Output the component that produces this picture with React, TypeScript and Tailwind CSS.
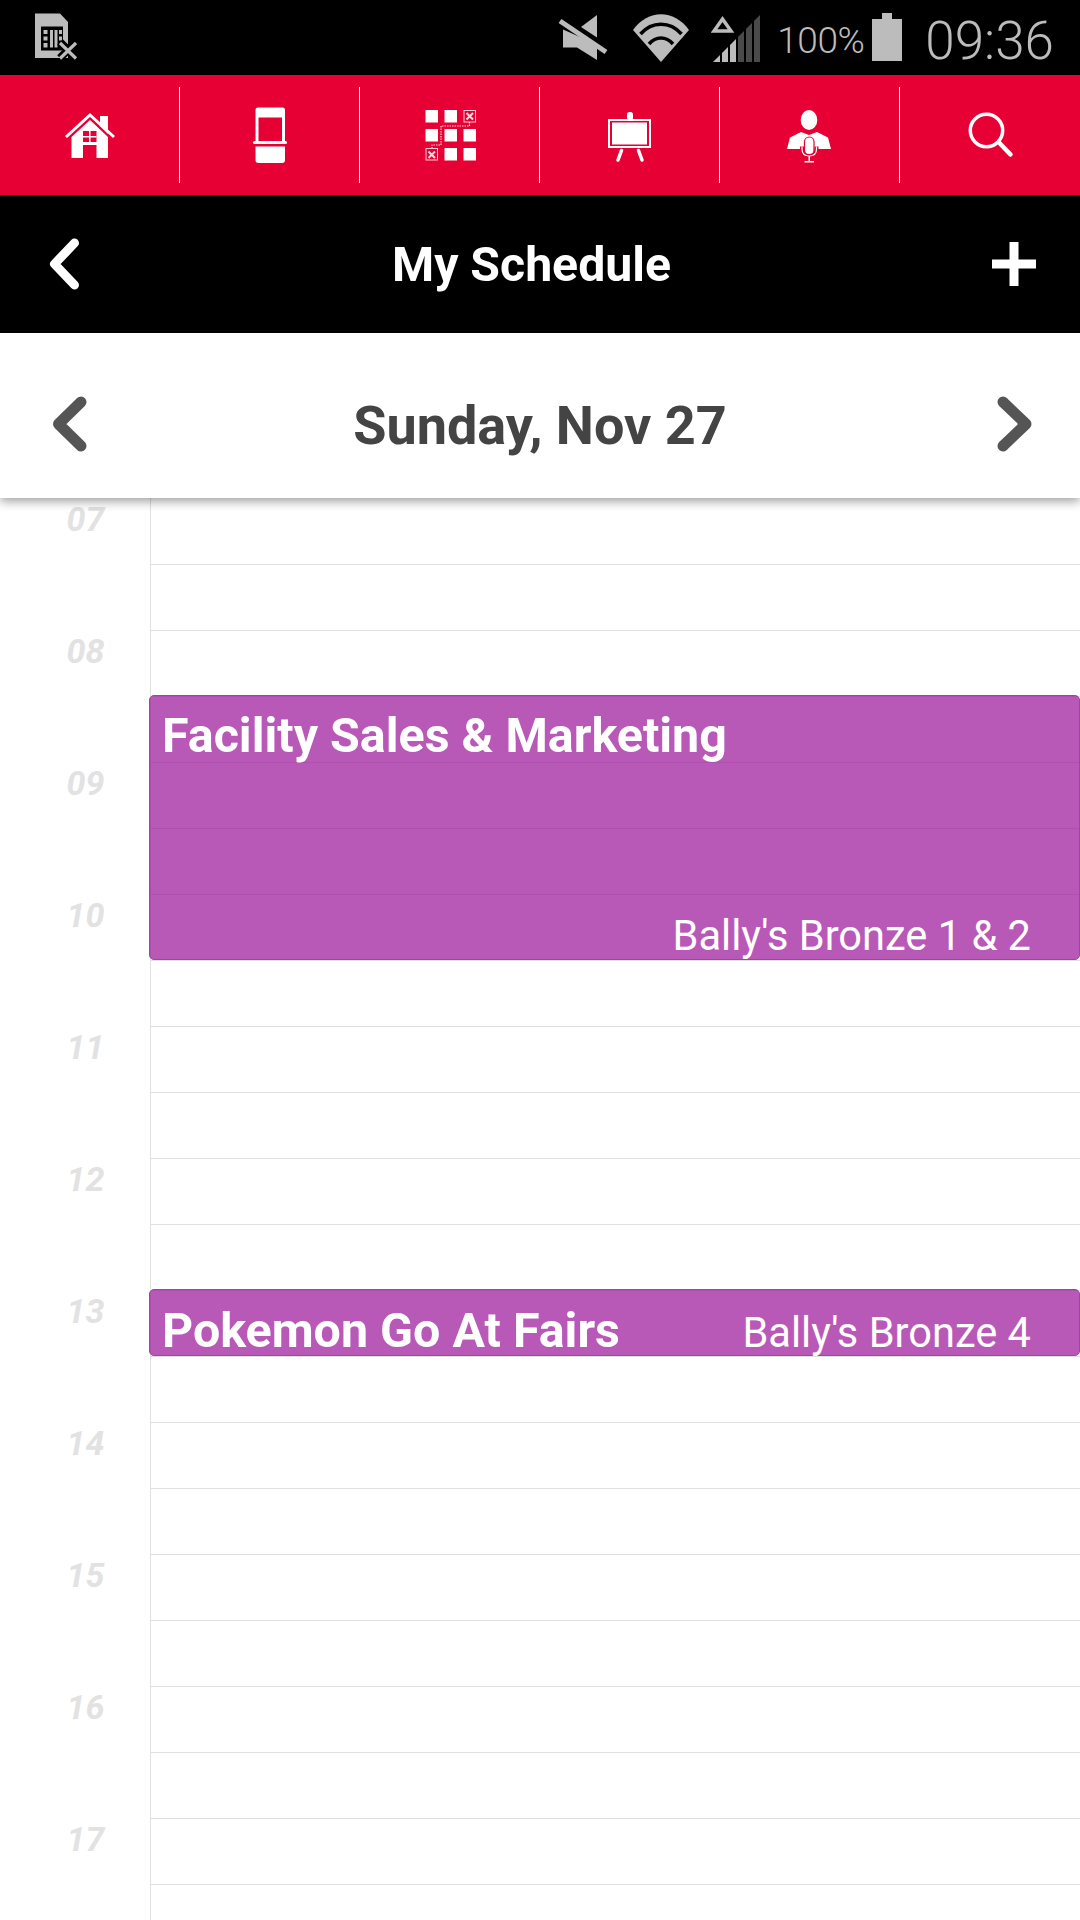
const HOURS = ["07","08","09","10","11","12","13","14","15","16","17"];
const ROWS = Array.from({ length: 22 }, (_, i) => i);
const GREY = "#bcbcbc";
const RED = "#e70033";

function Sim() {
  return (
    <svg width="60" height="60" viewBox="25 10 60 60" className="block">
      <path d="M35 15.5H60L68 24V60H35Z" fill={GREY} />
      <rect x="41" y="28.5" width="22" height="24" fill="#000" />
      <rect x="43.5" y="32" width="4" height="4" fill={GREY} />
      <rect x="43.5" y="38.5" width="4" height="4" fill={GREY} />
      <rect x="43.5" y="45" width="4" height="4.5" fill={GREY} />
      <rect x="50" y="32" width="3" height="17.5" fill={GREY} />
      <rect x="54.5" y="32" width="3" height="17.5" fill={GREY} />
      <rect x="59" y="32" width="3" height="4" fill={GREY} />
      <rect x="59" y="38.5" width="3" height="4" fill={GREY} />
      <path d="M60 44L76 60M76 44L60 60" stroke="#000" strokeWidth="8" />
      <path d="M60 45L76 60.5M76 45L60 60.5" stroke={GREY} strokeWidth="3.2" />
    </svg>
  );
}

function Mute() {
  return (
    <svg width="50" height="50" viewBox="558 13 50 50" className="block">
      <path d="M563 29.5V47.5H577L597 60V44.5Z" fill={GREY} />
      <path d="M597 15V37.5L581 27Z" fill={GREY} />
      <path d="M560 21L606 52" stroke={GREY} strokeWidth="5" />
    </svg>
  );
}

function Wifi() {
  return (
    <svg width="58" height="50" viewBox="632 12 58 50" className="block">
      <path d="M633 29C648 8 674 8 689 29L661 61Z" fill={GREY} />
      <path d="M640.500 33C652 20 670 20 681.500 33" fill="none" stroke="#000" strokeWidth="3.500" />
      <path d="M649 43C656 35 666 35 673 43" fill="none" stroke="#000" strokeWidth="3.500" />
    </svg>
  );
}

function Signal() {
  return (
    <svg width="50" height="50" viewBox="710 12 50 50" className="block">
      <path d="M721.500 18L730 30H713Z" fill="none" stroke={GREY} strokeWidth="3.500" />
      <path d="M712 61L719 54V61Z" fill={GREY} />
      <path d="M721 61V52L727 46V61Z" fill={GREY} />
      <path d="M729 61V44L735 38V61Z" fill={GREY} />
      <path d="M737 61V36L743 30V61Z" fill="#4a4a4a" />
      <path d="M745 61V28L751 22V61Z" fill="#4a4a4a" />
      <path d="M753 61V20L759 14V61Z" fill="#4a4a4a" />
    </svg>
  );
}

function Battery() {
  return (
    <svg width="30" height="50" viewBox="873 12 30 50" className="block">
      <path d="M883 12H893V18H903V60H873V18H883Z" fill={GREY} />
    </svg>
  );
}

function Home() {
  return (
    <svg width="80" height="80" viewBox="50 95 80 80" className="block">
      <path d="M66 137L90 115L114 137" fill="none" stroke="#fff" strokeWidth="3" />
      <path d="M100 116H108V134L100 126Z" fill="#fff" />
      <path d="M71.500 158V137L90 120L108 137V158H96.500V145H83V158Z" fill="#fff" />
      <rect x="83" y="131" width="13.500" height="11" fill={RED} />
      <rect x="89" y="131" width="1.500" height="11" fill="#fff" />
      <rect x="83" y="136" width="13.500" height="1.500" fill="#fff" />
    </svg>
  );
}

function Kiosk() {
  return (
    <svg width="80" height="80" viewBox="230 95 80 80" className="block">
      <path d="M255.500 141V110Q255.500 107.500 258 107.500H282.500Q285 107.500 285 110V141H282V117.500H258.500V141Z" fill="#fff" />
      <rect x="253" y="141" width="34" height="3" rx="1.500" fill="#fff" />
      <path d="M255.500 146.500H285V160Q285 163 282 163H258.500Q255.500 163 255.500 160Z" fill="#fff" />
    </svg>
  );
}

function GridMap() {
  const squares = [
    [425.5, 110], [444.5, 110],
    [425.5, 129], [444.5, 129], [463.500, 129],
    [444.5, 148], [463.500, 148],
  ];
  return (
    <svg width="80" height="80" viewBox="410 95 80 80" className="block">
      {squares.map(([x, y]) => (
        <rect key={`${x}-${y}`} x={x} y={y} width="12.500" height="12.500" fill="#fff" />
      ))}
      <rect x="464" y="110.500" width="11.500" height="11.500" fill="none" stroke="#fff" strokeOpacity="0.8" />
      <rect x="426" y="148.500" width="11.500" height="11.500" fill="none" stroke="#fff" strokeOpacity="0.8" />
      <path d="M466.500 113L473 119.500M473 113L466.500 119.500M428.500 151.500L435 158M435 151.500L428.500 158" stroke="#fff" strokeOpacity="0.85" strokeWidth="2" />
      <path d="M469.500 122V126H441V145H432V148" fill="none" stroke="#fff" strokeOpacity="0.85" strokeWidth="1.200" strokeDasharray="1.500 1" />
    </svg>
  );
}

function Easel() {
  return (
    <svg width="80" height="80" viewBox="590 95 80 80" className="block">
      <rect x="627" y="112" width="6" height="8" rx="2.500" fill="#fff" />
      <rect x="609" y="120" width="41" height="27" fill="none" stroke="#fff" strokeWidth="2" />
      <rect x="612" y="122.500" width="35" height="22" fill="#fff" />
      <path d="M621.500 150.500L618 160M638.500 150.500L642 160" stroke="#fff" strokeWidth="3.500" strokeLinecap="round" />
    </svg>
  );
}

function Speaker() {
  return (
    <svg width="80" height="80" viewBox="770 95 80 80" className="block">
      <ellipse cx="809" cy="120" rx="8.300" ry="10" fill="#fff" />
      <path d="M801 132L809 135L817 132L828 137.500L831 149H787L790 137.500Z" fill="#fff" />
      <rect x="804.500" y="137" width="9.500" height="18" rx="4.700" fill="#fff" stroke={RED} strokeWidth="1.200" />
      <path d="M802 146.500V149Q802 156 809.200 156Q816.500 156 816.500 149V146.500" fill="none" stroke={RED} strokeWidth="4" />
      <path d="M802 146.500V149Q802 156 809.200 156Q816.500 156 816.500 149V146.500" fill="none" stroke="#fff" strokeWidth="1.200" />
      <rect x="808.500" y="156" width="1.500" height="5.500" fill="#fff" />
      <rect x="804.500" y="161" width="9.500" height="1.500" fill="#fff" />
    </svg>
  );
}

function Search() {
  return (
    <svg width="80" height="80" viewBox="950 95 80 80" className="block">
      <circle cx="986.500" cy="130.500" r="16.200" fill="none" stroke="#fff" strokeWidth="3.500" />
      <path d="M998.500 142L1010.500 154.500" stroke="#fff" strokeWidth="4.500" strokeLinecap="round" />
    </svg>
  );
}

function Chevron({ d, color, w, vb, width, height, blur }: { d: string; color: string; w: number; vb: string; width: number; height: number; blur?: boolean }) {
  return (
    <svg width={width} height={height} viewBox={vb} className={blur ? "block blur-[0.6px]" : "block"}>
      <path d={d} fill="none" stroke={color} strokeWidth={w} strokeLinecap="round" strokeLinejoin="round" />
    </svg>
  );
}

function NavCell({ children, last }: { children: React.ReactNode; last?: boolean }) {
  return (
    <div className={last ? "w-[180px] h-24 flex items-center justify-center" : "w-[180px] h-24 flex items-center justify-center border-r border-white"}>
      {children}
    </div>
  );
}

export default function App() {
  return (
    <div className="w-[1080px] h-[1920px] overflow-hidden bg-white font-['Roboto',sans-serif] flex flex-col">
      <div className="h-[75px] bg-black flex items-center justify-between shrink-0 pl-[25px] pr-[26px]">
        <Sim />
        <div className="flex items-center">
          <Mute />
          <div className="ml-[24px]"><Wifi /></div>
          <div className="ml-[21px]"><Signal /></div>
          <span className="ml-[16px] pt-[5px] text-[37px] leading-none text-[#bcbcbc] font-light tracking-[-0.5px]">100%</span>
          <div className="ml-[8px]"><Battery /></div>
          <span className="ml-[23px] pt-[7px] text-[53px] leading-none text-[#bcbcbc] font-light">09:36</span>
        </div>
      </div>

      <div className="h-[120px] bg-[#e70033] flex items-center shrink-0">
        <NavCell><Home /></NavCell>
        <NavCell><Kiosk /></NavCell>
        <NavCell><GridMap /></NavCell>
        <NavCell><Easel /></NavCell>
        <NavCell><Speaker /></NavCell>
        <NavCell last><Search /></NavCell>
      </div>

      <div className="h-[138px] bg-black flex items-center justify-between shrink-0 pl-[46px] pr-[42px]">
        <Chevron d="M74.500 243L54.500 264L74.500 285" color="#fff" w={9} vb="46 235 40 58" width={40} height={58} />
        <span className="mr-[13px] pt-[2px] text-[48.2px] font-bold text-white leading-none">My Schedule</span>
        <svg width="48" height="48" viewBox="990 240 48 48" className="block">
          <path d="M992 259.500H1009.500V242H1018.500V259.500H1036V268.500H1018.500V286H1009.500V268.500H992Z" fill="#fff" />
        </svg>
      </div>

      <div className="h-[165px] bg-white flex items-center justify-between shrink-0 pl-[48px] pr-[43px] pt-[17px] relative z-10 shadow-[0_3px_10px_rgba(0,0,0,0.4)]">
        <Chevron d="M81 402L58.500 424L81 446" color="#555" w={11} vb="48 392 44 64" width={44} height={64} blur />
        <span className="mr-[5px] pt-[4px] text-[54px] font-bold text-[#444444] leading-none">Sunday, Nov 27</span>
        <Chevron d="M1003 402L1026 424L1003 446" color="#555" w={11} vb="993 392 44 64" width={44} height={64} blur />
      </div>

      <div className="flex-1 flex relative">
        <div className="w-[150px] shrink-0 flex flex-col">
          {HOURS.map((h) => (
            <div key={h} className="h-[132px] shrink-0 pt-[3px] pl-[21px] text-center">
              <span className="text-[34px] font-bold italic text-[#e2e2e2] leading-[36px]">{h}</span>
            </div>
          ))}
        </div>
        <div className="flex-1 border-l border-[#e0e0e0] flex flex-col pt-px">
          {ROWS.map((r) => (
            <div key={r} className="h-[66px] shrink-0 border-b border-[#e0e0e0]" />
          ))}
        </div>

        <div className="absolute left-[149px] right-0 top-[197px] h-[265px] rounded-[5px] border border-[#a83ea8] bg-[rgba(154,19,154,0.7)] flex flex-col justify-between pl-[12px] pr-[48px]">
          <span className="text-[48.4px] font-bold text-white leading-none pt-[16px]">Facility Sales &amp; Marketing</span>
          <span className="text-[41.6px] text-white leading-none self-end pb-[2px]">Bally's Bronze 1 &amp; 2</span>
        </div>

        <div className="absolute left-[149px] right-0 top-[791px] h-[67px] rounded-[5px] border border-[#a83ea8] bg-[rgba(154,19,154,0.7)] flex items-baseline justify-between pl-[12px] pr-[48px] pt-[17px]">
          <span className="text-[48.4px] font-bold text-white leading-none">Pokemon Go At Fairs</span>
          <span className="text-[41.6px] text-white leading-none">Bally's Bronze 4</span>
        </div>
      </div>
    </div>
  );
}
